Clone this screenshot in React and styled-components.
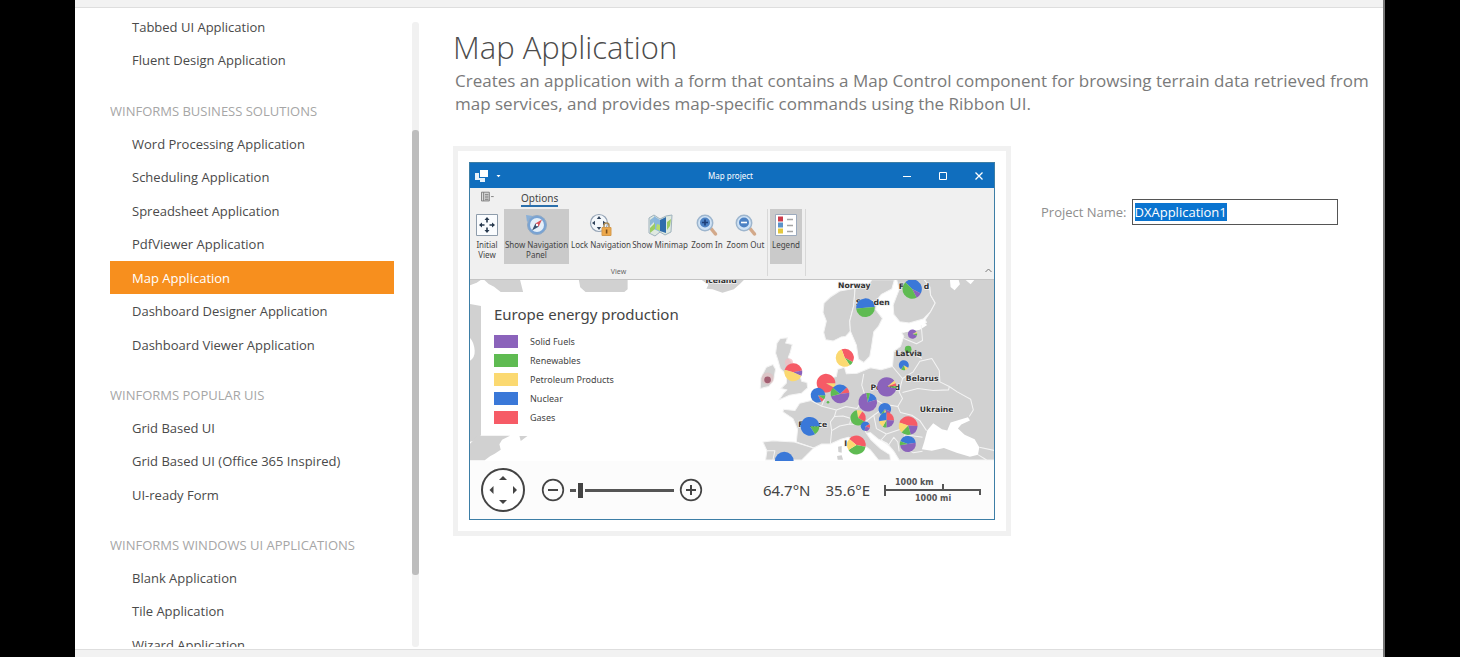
import React, { useEffect, useRef } from "react";
import styled, { createGlobalStyle } from "styled-components";

const GlobalStyle = createGlobalStyle`
    * {
        box-sizing: border-box;
    }

    body {
        margin: 0;
        background: #000;
        font-family: "Open Sans", "Noto Sans", sans-serif;
    }

    button {
        font-family: inherit;
        color: inherit;
        border: none;
        background: none;
        padding: 0;
    }
`;

const colors = {
    purple: "#8b63bb",
    green: "#5fbb52",
    yellow: "#fbd971",
    blue: "#3a78d8",
    red: "#f65b66",
    land: "#d1d1d1",
};

const Page = styled.div`
    height: 100vh;
    padding: 0 75px;
`;

const Dialog = styled.div`
    display: flex;
    flex-direction: column;
    height: 100%;
    background: #fff;
    border-right: 2px solid #777;
`;

const Edge = styled.div`
    flex: none;
    height: 8px;
    background: #f2f2f2;
    border-top: ${(props) => (props.$bottom ? "1px solid #dedede" : "none")};
    border-bottom: ${(props) => (props.$bottom ? "none" : "1px solid #dedede")};
`;

const Body = styled.div`
    flex: 1;
    min-height: 0;
    display: flex;
`;

const Sidebar = styled.aside`
    flex: none;
    display: flex;
    width: 344px;
    padding-left: 35px;
    padding-bottom: 2px;
`;

const Nav = styled.nav`
    flex: 1;
    overflow: hidden;
    padding-top: 2px;
    margin-right: 18px;
`;

const Group = styled.section`
    margin-bottom: 17px;
`;

const GroupTitle = styled.h2`
    margin: 0;
    padding-top: 2px;
    font-size: 13px;
    font-weight: 400;
    line-height: 31px;
    color: #a6a6a6;
    white-space: nowrap;
`;

const List = styled.ul`
    list-style: none;
    margin: 0;
    padding: 0;
`;

const Item = styled.li`
    &:nth-child(even) {
        padding-bottom: 1px;
    }
`;

const ItemLink = styled.a`
    display: block;
    padding: 2px 0 0 22px;
    font-size: 13px;
    line-height: 31px;
    white-space: nowrap;
    text-decoration: none;
    color: ${(props) => (props.$active ? "#fff" : "#4a4a4a")};
    background: ${(props) => (props.$active ? "#f78f1e" : "transparent")};
`;

const ScrollTrack = styled.div`
    width: 7px;
    margin-top: 14px;
    padding-top: 108px;
    background: #f1f1f1;
    border-radius: 3px;
`;

const ScrollThumb = styled.div`
    height: 86%;
    background: #bdbdbd;
    border-radius: 3px;
`;

const Content = styled.main`
    flex: 1;
    min-width: 0;
    padding: 18px 14px 0 34px;
`;

const Title = styled.h1`
    margin: 0;
    font-size: 31px;
    font-weight: 300;
    line-height: 43px;
    color: #4c4c4c;
`;

const Description = styled.p`
    margin: 0 0 31px 2px;
    font-size: 17px;
    line-height: 23px;
    color: #7a7a7a;
`;

const Details = styled.div`
    display: flex;
    align-items: flex-start;
    gap: 30px;
`;

const Preview = styled.div`
    flex: 0 1 558px;
    padding: 11px;
    border: 5px solid #f1f1f1;
`;

const Field = styled.form`
    display: flex;
    align-items: center;
    gap: 5px;
    margin-top: 53px;
`;

const Label = styled.label`
    font-size: 13px;
    color: #8e8e8e;
    white-space: nowrap;
`;

const Input = styled.input`
    width: 206px;
    height: 26px;
    padding: 0 2px;
    border: 1px solid #555;
    border-radius: 0;
    outline: none;
    font-family: inherit;
    font-size: 13px;
    color: #333;

    &::selection {
        background: #0a74d0;
        color: #fff;
    }
`;

const AppWindow = styled.div`
    border: 1px solid #3d7ea6;
    background: #fff;
    font-family: "Noto Sans", sans-serif;
    color: #444;
`;

const TitleBar = styled.div`
    display: grid;
    grid-template-columns: 1fr auto 1fr;
    align-items: center;
    height: 25px;
    padding: 0 8px 0 5px;
    background: #106ebe;
    color: #fff;
    font-size: 8px;
`;

const WindowButtons = styled.div`
    display: flex;
    justify-content: flex-end;
    gap: 22px;
`;

const WindowButton = styled.button`
    display: flex;
    width: 14px;
    height: 14px;
`;

const Ribbon = styled.div`
    background: #f0f0f0;
    border-bottom: 1px solid #c4c4c4;
`;

const Tabs = styled.div`
    display: flex;
    gap: 26px;
    height: 21px;
    padding: 2px 0 0 11px;
`;

const Tab = styled.button`
    height: 17px;
    line-height: 16px;
    font-size: 10px;
    border-bottom: 2px solid #2b6fab;
`;

const RibbonRow = styled.div`
    display: flex;
    align-items: stretch;
    height: 70px;
`;

const RibbonGroup = styled.div`
    display: flex;
    flex-direction: column;
    justify-content: space-between;
    padding: 0 3px 0 ${(props) => (props.$first ? "3px" : "2px")};
    border-right: 1px solid #d8d8d8;
    margin-bottom: 3px;
`;

const RibbonButtons = styled.div`
    display: flex;
    gap: 3px;
`;

const RibbonButton = styled.button`
    display: flex;
    flex-direction: column;
    align-items: center;
    gap: 3px;
    width: ${(props) => props.$width}px;
    height: 55px;
    padding-top: 4px;
    font-size: 8px;
    line-height: 10px;
    white-space: pre;
    background: ${(props) => (props.$pressed ? "#cacaca" : "transparent")};
`;

const IconSlot = styled.span`
    flex: none;
    display: flex;
    align-items: center;
    height: 24px;
`;

const GroupCaption = styled.div`
    font-size: 7px;
    line-height: 8px;
    text-align: center;
    color: #666;
`;

const Collapse = styled.button`
    align-self: flex-end;
    display: flex;
    margin: 0 1px 6px auto;
`;

const MapArea = styled.div`
    position: relative;
`;

const MapSvg = styled.svg`
    display: block;
    width: 100%;
    height: auto;
`;

const Legend = styled.div`
    position: absolute;
    top: 20px;
    left: 11px;
    width: 270px;
    padding: 4px 13px 7px;
    background: #fff;
`;

const LegendTitle = styled.h3`
    margin: 0 0 8px;
    font-size: 15px;
    font-weight: 400;
    line-height: 20px;
`;

const LegendRow = styled.div`
    display: flex;
    align-items: center;
    gap: 12px;
    height: 19px;
    font-size: 9px;
`;

const Swatch = styled.span`
    width: 24px;
    height: 13px;
    background: ${(props) => props.$color};
`;

const MapPanel = styled.div`
    display: flex;
    align-items: center;
    height: 58px;
    padding: 0 12px 0 10px;
    background: #fcfcfc;
`;

const RoundButton = styled.button`
    display: flex;
    flex: none;
`;

const ZoomBox = styled.div`
    display: flex;
    align-items: center;
    gap: 5px;
    margin-left: 15px;
`;

const Slider = styled.input`
    appearance: none;
    width: 104px;
    height: 15px;
    margin: 0;
    background: linear-gradient(#555, #555) center / 100% 3px no-repeat;

    &::-webkit-slider-thumb {
        appearance: none;
        box-sizing: content-box;
        width: 5px;
        height: 15px;
        background: #444;
        border: solid #fcfcfc;
        border-width: 0 2px;
    }
`;

const Coordinates = styled.div`
    display: flex;
    gap: 15px;
    margin-left: auto;
    margin-right: 14px;
    font-size: 15px;
`;

const groups = [
    { items: ["Tabbed UI Application", "Fluent Design Application"] },
    {
        title: "WINFORMS BUSINESS SOLUTIONS",
        items: [
            "Word Processing Application",
            "Scheduling Application",
            "Spreadsheet Application",
            "PdfViewer Application",
            "Map Application",
            "Dashboard Designer Application",
            "Dashboard Viewer Application",
        ],
    },
    {
        title: "WINFORMS POPULAR UIS",
        items: ["Grid Based UI", "Grid Based UI (Office 365 Inspired)", "UI-ready Form"],
    },
    {
        title: "WINFORMS WINDOWS UI APPLICATIONS",
        items: ["Blank Application", "Tile Application", "Wizard Application"],
    },
];

const legend = [
    ["Solid Fuels", colors.purple],
    ["Renewables", colors.green],
    ["Petroleum Products", colors.yellow],
    ["Nuclear", colors.blue],
    ["Gases", colors.red],
];

// x, y, radius, start angle in degrees, then [color, percent] slices clockwise
const pies = [
    [517, 42, 29, -45, [["blue", 45], ["purple", 10], ["green", 45]]],
    [377, 98, 28, -95, [["blue", 50], ["green", 50]]],
    [315, 248, 27, -20, [["red", 38], ["green", 8], ["yellow", 54]]],
    [518, 177, 14, 60, [["yellow", 6], ["green", 8], ["purple", 86]]],
    [505, 222, 10, 0, [["green", 100]]],
    [492, 270, 15, 120, [["yellow", 12], ["green", 14], ["blue", 74]]],
    [441, 335, 29, 50, [["yellow", 5], ["red", 5], ["green", 4], ["purple", 86]]],
    [161, 291, 27, -75, [["red", 43], ["purple", 10], ["yellow", 47]]],
    [259, 324, 28, 90, [["yellow", 8], ["red", 92]]],
    [235, 360, 22, 90, [["green", 10], ["red", 8], ["blue", 82]]],
    [301, 356, 28, -50, [["blue", 27], ["red", 10], ["purple", 48], ["green", 15]]],
    [265, 381, 4, 0, [["green", 100]]],
    [384, 381, 28, -10, [["green", 7], ["blue", 16], ["purple", 77]]],
    [435, 402, 19, 110, [["purple", 14], ["yellow", 8], ["green", 8], ["blue", 70]]],
    [355, 428, 23, -10, [["yellow", 12], ["red", 24], ["green", 64]]],
    [377, 453, 14, 60, [["red", 14], ["purple", 22], ["blue", 64]]],
    [440, 434, 23, 0, [["red", 26], ["purple", 24], ["green", 8], ["yellow", 14], ["blue", 28]]],
    [505, 451, 28, -70, [["red", 45], ["purple", 20], ["green", 17], ["yellow", 18]]],
    [504, 506, 24, -70, [["blue", 42], ["purple", 50], ["green", 8]]],
    [211, 453, 28, 90, [["green", 16], ["blue", 84]]],
    [350, 509, 28, -50, [["red", 42], ["green", 38], ["yellow", 20]]],
    [134, 557, 28, 0, [["blue", 100]]],
];

const labels = [
    ["Norway", 295, 40],
    ["F", 477, 41],
    ["d", 552, 41],
    ["Sweden", 348, 89],
    ["Belarus", 498, 316],
    ["Poland", 392, 344],
    ["Ukraine", 540, 411],
    ["France", 176, 455],
    ["I", 314, 512],
];

const slicePath = (cx, cy, r, from, to) => {
    const point = (deg) => {
        const rad = ((deg - 90) * Math.PI) / 180;
        return `${cx + r * Math.cos(rad)} ${cy + r * Math.sin(rad)}`;
    };
    return `M${cx} ${cy}L${point(from)}A${r} ${r} 0 ${to - from > 180 ? 1 : 0} 1 ${point(to)}Z`;
};

const Pie = ({ cx, cy, r, start, slices }) => {
    if (slices.length === 1) {
        return <circle cx={cx} cy={cy} r={r} fill={colors[slices[0][0]]} />;
    }
    let angle = start;
    return (
        <g>
            {slices.map(([color, percent]) => {
                const from = angle;
                angle += percent * 3.6;
                return <path key={color} d={slicePath(cx, cy, r, from, angle)} fill={colors[color]} />;
            })}
        </g>
    );
};

const EuropeMap = () => (
    <MapSvg viewBox="0 0 1569 543" role="img" aria-label="Map of Europe">
        <rect width="1569" height="543" fill="#fff" />
        <g fill={colors.land}>
            <path d="M0 0H32L20 8L0 16ZM43 0H150L159 36H92L72 20L56 12ZM326 0H472V28L462 36H346L330 22ZM694 0H820L808 12L790 28L756 38L726 28L708 26L714 14Z" />
            <path d="M0 72L33 78V465L10 482L0 484V242Q15 232 14 212Q12 186 0 174Z" />
            <path d="M0 490L24 466H120L96 478L88 492L92 508L74 520L60 528L44 540H0ZM148 467H172L152 482Z" />
        </g>
        <g transform="translate(807 -15)">
            <g fill={colors.land} stroke="#f4f4f4" strokeWidth="3" strokeLinejoin="round">
                <path d="M346 40L300 48L272 66L253 84L250 112L260 138L252 172L258 194L280 198L304 186L318 184L332 168L330 138L342 92Z" />
                <path d="M346 40L384 34L396 14H464L456 42L425 58L412 74L408 104L428 130L416 154L402 170L396 210L390 244L372 262L356 252L350 210L332 168L330 138L342 92Z" />
                <path d="M470 12L478 44L470 64L460 90L462 118L480 140L508 144L550 132L572 110L586 84L572 60L570 36L552 12Z" />
                <path d="M122 190L144 188L138 204L158 208L152 232L146 246L160 266L178 290L186 318L202 322L204 338L186 354L150 360L118 374L132 354L142 344L124 340L140 324L142 300L122 280L114 252L108 234L112 204Z" />
                <path d="M64 308L80 276L100 268L108 282L102 316L88 334L62 340Z" />
                <path d="M552 12H766V554H478L462 528L442 504L416 492L392 472L380 474L394 494L422 520L450 538L452 554H416L392 524L358 500L326 486L304 492L272 506L246 506L222 518L170 500L174 462L160 430L130 410L132 402L166 406L180 384L214 376L224 350L246 332L268 310L290 304L294 282L314 276L320 296L352 294L392 278L424 284L458 274L462 228L482 214L492 184L486 174L508 164L548 150L560 142L556 134L572 110L586 84L572 60L570 36Z" />
                <path d="M70 500L100 496L164 500L222 518L204 536L186 554H78L82 526Z" />
            </g>
            <g fill="#fff">
                <path d="M553 500L562 466L580 444L606 462L622 466L632 442L684 426L690 436L664 448L654 460L674 478L704 492L718 516L714 538L690 544L650 532L612 518L576 526L546 522Z" />
                <path d="M630 14H656L660 28L644 46L632 36ZM676 14H704L692 28Z" />
                <path d="M462 158L500 148L552 142L562 150L540 164L492 172Z" />
            </g>
            <g fill={colors.land}>
                <path d="M295 514L306 512L306 532L296 530ZM292 542L306 540L310 553H294Z" />
            </g>
            <g fill="none" stroke="#f4f4f4" strokeWidth="3" strokeLinejoin="round">
                <path d="M372 296L366 330L376 362L408 374L430 386L474 394L488 370L478 350L488 310L458 274M488 310L520 290L540 258L576 250L598 286L600 320L628 334L626 344L580 346L534 340L488 352" />
                <path d="M462 228L496 232L536 244L546 250M492 190L530 206L548 196L544 150M628 334L652 350L692 372L700 404L688 424M474 394L482 412L516 420L540 436L560 466" />
                <path d="M214 376L244 392L290 404L284 424L272 440L276 466L272 506M290 404L318 394L352 400L376 362M284 424L310 422L334 430L330 446L300 452L276 466M330 446L366 448L402 420L430 400M402 420L410 460L440 476L482 462L496 478L548 486M366 448L380 474M440 476L424 494L446 510L462 486L474 500L478 528M496 478L482 512L520 532L548 528M82 526L106 526L100 554M718 516L766 526M714 538L740 554M234 352L254 372L246 392" />
            </g>
            <circle cx="84" cy="310" r="18" fill="#e8b9bd" opacity=".5" />
            <circle cx="84" cy="314" r="10" fill="#a35f72" />
            <circle cx="148" cy="262" r="12" fill="#f3bcc2" opacity=".7" />
            <g
                fontFamily="'DejaVu Sans', sans-serif"
                fontSize="23"
                fontWeight="700"
                fill="#333"
                stroke="#f0f0f0"
                strokeWidth="4"
                paintOrder="stroke"
            >
                {labels.map(([text, x, y]) => (
                    <text key={text} x={x} y={y}>{text}</text>
                ))}
                <text x="-102" y="24">Iceland</text>
            </g>
            {pies.map(([cx, cy, r, start, slices]) => (
                <Pie key={`${cx}-${cy}`} cx={cx} cy={cy} r={r} start={start} slices={slices} />
            ))}
            <text
                x="467"
                y="244"
                fontFamily="'DejaVu Sans', sans-serif"
                fontSize="23"
                fontWeight="700"
                fill="#333"
            >
                Latvia
            </text>
        </g>
    </MapSvg>
);

const LogoIcon = () => (
    <svg width="28" height="14" viewBox="0 0 28 14" fill="#fff" aria-hidden="true">
        <path d="M5 1h8v7H5z" />
        <path d="M0 4h4v5h3v2H0zM5 9h5v4H5z" opacity=".9" />
        <path d="M21.500 6h4l-2 2.200z" />
    </svg>
);

const MenuIcon = () => (
    <svg width="16" height="14" viewBox="0 0 16 14" fill="none" stroke="#777" aria-hidden="true">
        <path d="M.5 1.500h9v10h-9z" fill="#dcdcdc" />
        <path d="M3 1.500v10M4.500 4h4M4.500 6h4M4.500 8h4M4.500 10h4" />
        <path d="M11.500 6.500h3" />
    </svg>
);

const InitialViewIcon = () => (
    <svg width="22" height="22" viewBox="0 0 22 22" aria-hidden="true">
        <path d="M.5.5h21v21H.5z" fill="#fafcfe" stroke="#8e9cab" />
        <path
            d="M11 3l2.500 3h-1.700v2.500h-1.600V6H8.500zM11 19l2.500-3h-1.700v-2.500h-1.600V16H8.500zM3 11l3-2.500v1.700h2.500v1.600H6v1.700zM19 11l-3-2.500v1.700h-2.500v1.600H16v1.700z"
            fill="#26384d"
        />
    </svg>
);

const CompassIcon = () => (
    <svg width="24" height="22" viewBox="0 0 24 22" aria-hidden="true">
        <path d="M1 1l7 1-6 6z" fill="#8ab0d8" />
        <circle cx="12" cy="11" r="9.500" fill="#78a3d4" stroke="#8fa9c5" />
        <circle cx="12" cy="11" r="7" fill="#e4eff9" />
        <path d="M17 5.500l-3.400 7.200-3.200-3.200z" fill="#d8515a" />
        <path d="M7 16.500l3.400-7 3.200 3.200z" fill="#39516f" />
        <circle cx="12" cy="11" r="1.200" fill="#fff" />
    </svg>
);

const LockIcon = () => (
    <svg width="24" height="24" viewBox="0 0 24 24" aria-hidden="true">
        <circle cx="10" cy="10" r="8.500" fill="#f4f8fc" stroke="#94a3b5" strokeWidth="1.200" />
        <path d="M10 3l2.200 3H7.800zM10 17l2.200-3H7.800zM3 10l3-2.200v4.400zM17 10l-3-2.200v4.400z" fill="#31445c" />
        <path d="M15 15v-2.500a2.500 2.500 0 0 1 5 0V15" fill="none" stroke="#a98b59" strokeWidth="1.500" />
        <path d="M13 14.500h9v8h-9z" fill="#eda84b" stroke="#d39a4e" />
        <path d="M16.800 16.500h1.600v4h-1.600z" fill="#7b4f1b" />
    </svg>
);

const MinimapIcon = () => (
    <svg width="25" height="23" viewBox="0 0 25 23" aria-hidden="true">
        <path d="M1 4l5-3 6 4 6-3 6-1-1 17-6 3-5-3-5 4-6-3z" fill="#dfe9e0" stroke="#9fb2bd" />
        <path d="M6 2l6 4v12l-6-3z" fill="#8ab6dd" />
        <path d="M12 6l6-3v16l-6-2z" fill="#2f6dac" />
        <path d="M2 14l5-5v6l-5 4zM19 8l4-3-1 7-3 4z" fill="#9ccc62" />
        <path d="M2 6l4-3v5l-4 4z" fill="#8fb8d8" />
        <path d="M9 10l3 1v6l-4-2z" fill="#b7dc6f" />
    </svg>
);

const MagnifierIcon = ({ plus }) => (
    <svg width="22" height="23" viewBox="0 0 22 23" aria-hidden="true">
        <path d="M15 14.500l4.500 5.500" stroke="#d3a98a" strokeWidth="3.500" strokeLinecap="round" />
        <circle cx="9" cy="9" r="7.700" fill="#cfe2f5" stroke="#9db5cd" strokeWidth="1.500" />
        <circle cx="9" cy="8.500" r="5" fill="#4d82c4" />
        <path d={plus ? "M6 8.500h6M9 5.500v6" : "M6 8.500h6"} stroke={plus ? "#1d3f78" : "#fff"} strokeWidth="1.600" />
    </svg>
);

const LegendIcon = () => (
    <svg width="22" height="22" viewBox="0 0 22 22" aria-hidden="true">
        <path d="M.5.500h21v21H.5z" fill="#fff" stroke="#9caabd" />
        <path d="M3 2.500h5v5H3z" fill="#cc3c4b" />
        <path d="M3 8.500h5v5H3z" fill="#5b92c9" />
        <path d="M3 14.500h5v5H3z" fill="#e3c83e" />
        <path d="M12 5.500h6M12 11.500h6M12 17.500h6" stroke="#a5a5a5" strokeWidth="1.500" />
    </svg>
);

const PanIcon = () => (
    <svg width="46" height="46" viewBox="0 0 46 46" aria-hidden="true">
        <circle cx="23" cy="23" r="21" fill="#fff" stroke="#444" strokeWidth="2" />
        <path d="M23 9l4 4h-8zM23 37l4-4h-8zM9.500 23l4-4v8zM37 23l-4-4v8z" fill="#444" />
    </svg>
);

const ZoomIcon = ({ plus }) => (
    <svg width="24" height="24" viewBox="0 0 24 24" fill="none" stroke="#444" aria-hidden="true">
        <circle cx="12" cy="12" r="10.300" strokeWidth="1.700" />
        <path d={plus ? "M7 12h10M12 7v10" : "M7 12h10"} strokeWidth="2" />
    </svg>
);

const ScaleBar = () => (
    <svg width="98" height="30" viewBox="0 0 98 30" aria-label="Map scale">
        <path d="M1 10v11M1 15h95v5M59 15V9" fill="none" stroke="#555" strokeWidth="2" />
        <g fontFamily="'DejaVu Sans', sans-serif" fontSize="8" fontWeight="700" fill="#555">
            <text x="11" y="10">1000 km</text>
            <text x="31" y="26">1000 mi</text>
        </g>
    </svg>
);

const RibbonCommand = ({ icon, label, width, pressed }) => (
    <RibbonButton type="button" $width={width} $pressed={pressed}>
        <IconSlot>{icon}</IconSlot>
        {label}
    </RibbonButton>
);

const MapWindow = () => (
    <AppWindow>
        <TitleBar>
            <LogoIcon />
            <span>Map project</span>
            <WindowButtons>
                <WindowButton type="button" aria-label="Minimize">
                    <svg width="14" height="14" stroke="#fff"><path d="M3 7.500h8" /></svg>
                </WindowButton>
                <WindowButton type="button" aria-label="Maximize">
                    <svg width="14" height="14" fill="none" stroke="#fff"><path d="M3.500 3.500h7v7h-7z" /></svg>
                </WindowButton>
                <WindowButton type="button" aria-label="Close">
                    <svg width="14" height="14" stroke="#fff" strokeWidth="1.300"><path d="M3.500 3.500l7 7M10.500 3.500l-7 7" /></svg>
                </WindowButton>
            </WindowButtons>
        </TitleBar>
        <Ribbon>
            <Tabs>
                <WindowButton type="button" aria-label="Application menu"><MenuIcon /></WindowButton>
                <Tab type="button">Options</Tab>
            </Tabs>
            <RibbonRow>
                <RibbonGroup $first>
                    <RibbonButtons>
                        <RibbonCommand width={28} icon={<InitialViewIcon />} label={"Initial\nView"} />
                        <RibbonCommand width={65} icon={<CompassIcon />} label={"Show Navigation\nPanel"} pressed />
                        <RibbonCommand width={58} icon={<LockIcon />} label="Lock Navigation" />
                        <RibbonCommand width={54} icon={<MinimapIcon />} label="Show Minimap" />
                        <RibbonCommand width={34} icon={<MagnifierIcon plus />} label="Zoom In" />
                        <RibbonCommand width={37} icon={<MagnifierIcon />} label="Zoom Out" />
                    </RibbonButtons>
                    <GroupCaption>View</GroupCaption>
                </RibbonGroup>
                <RibbonGroup>
                    <RibbonCommand width={32} icon={<LegendIcon />} label="Legend" pressed />
                </RibbonGroup>
                <Collapse type="button" aria-label="Collapse ribbon">
                    <svg width="9" height="6" fill="none" stroke="#777"><path d="M1.500 5l3-3 3 3" /></svg>
                </Collapse>
            </RibbonRow>
        </Ribbon>
        <MapArea>
            <EuropeMap />
            <Legend>
                <LegendTitle>Europe energy production</LegendTitle>
                {legend.map(([name, color]) => (
                    <LegendRow key={name}>
                        <Swatch $color={color} />
                        {name}
                    </LegendRow>
                ))}
            </Legend>
        </MapArea>
        <MapPanel>
            <RoundButton type="button" aria-label="Pan"><PanIcon /></RoundButton>
            <ZoomBox>
                <RoundButton type="button" aria-label="Zoom out"><ZoomIcon /></RoundButton>
                <Slider type="range" aria-label="Zoom level" min="0" max="100" defaultValue="6" />
                <RoundButton type="button" aria-label="Zoom in"><ZoomIcon plus /></RoundButton>
            </ZoomBox>
            <Coordinates>
                <span>64.7°N</span>
                <span>35.6°E</span>
            </Coordinates>
            <ScaleBar />
        </MapPanel>
    </AppWindow>
);

const App = () => {
    const nameRef = useRef(null);

    useEffect(() => {
        nameRef.current.focus();
        nameRef.current.select();
    }, []);

    return (
        <Page>
            <GlobalStyle />
            <Dialog>
                <Edge />
                <Body>
                    <Sidebar>
                        <Nav>
                            {groups.map(({ title, items }) => (
                                <Group key={items[0]}>
                                    {title && <GroupTitle>{title}</GroupTitle>}
                                    <List>
                                        {items.map((item) => (
                                            <Item key={item}>
                                                <ItemLink href="#" $active={item === "Map Application"}>{item}</ItemLink>
                                            </Item>
                                        ))}
                                    </List>
                                </Group>
                            ))}
                        </Nav>
                        <ScrollTrack>
                            <ScrollThumb />
                        </ScrollTrack>
                    </Sidebar>
                    <Content>
                        <Title>Map Application</Title>
                        <Description>
                            Creates an application with a form that contains a Map Control component for browsing
                            terrain data retrieved from map services, and provides map-specific commands using the
                            Ribbon UI.
                        </Description>
                        <Details>
                            <Preview>
                                <MapWindow />
                            </Preview>
                            <Field>
                                <Label htmlFor="project-name">Project Name:</Label>
                                <Input id="project-name" ref={nameRef} defaultValue="DXApplication1" />
                            </Field>
                        </Details>
                    </Content>
                </Body>
                <Edge $bottom />
            </Dialog>
        </Page>
    );
};

export default App;
